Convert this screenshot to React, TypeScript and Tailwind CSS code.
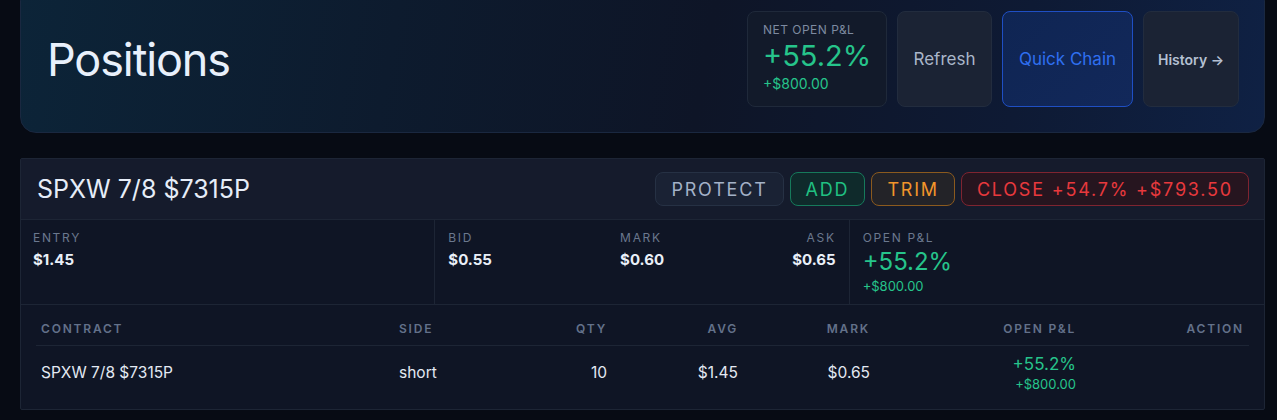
import React from "react";

export default function App() {
  const font = { fontFamily: "Inter, 'Noto Sans', sans-serif" };
  return (
    <div className="min-h-[420px] w-full bg-[#070b14] pl-[20px] pr-[12px] pb-[10px] overflow-hidden" style={font}>
      {/* Header card */}
      <div className="mt-[-15px] flex items-center justify-between rounded-2xl border border-[#1a2840] bg-[linear-gradient(100deg,#0c2438_0%,#0d1b2e_30%,#0e1527_55%,#0e1a34_80%,#0f2144_100%)] py-[25px] pl-[26px] pr-[25px]">
        <h1 className="text-[45px] font-normal leading-none tracking-tight text-[#e8f0fb]">Positions</h1>
        <div className="flex h-[96px] items-stretch gap-[10px]">
          <div className="flex w-[140px] flex-col rounded-lg border border-[#1f293a] bg-[#121a2a] px-[15px] pt-[10px]">
            <div className="text-[12px] leading-4 tracking-[0.04em] text-[#7d8aa0]">NET OPEN P&amp;L</div>
            <div className="text-[29px] leading-9 text-[#26c48b]">+55.2%</div>
            <div className="text-[14px] leading-5 text-[#26c48b]">+$800.00</div>
          </div>
          <button className="w-[95px] rounded-lg border border-[#222c3e] bg-[#1b2334] pt-[2px] text-[17px] text-[#aab6c9]">Refresh</button>
          <button className="w-[131px] rounded-lg border border-[#1f4fc4] bg-[linear-gradient(135deg,#0f2553_0%,#12285a_100%)] pt-[2px] text-[17px] text-[#2f6ff0]">Quick Chain</button>
          <button className="w-[96px] rounded-lg border border-[#222c3e] bg-[#1b2334] text-[14px] font-semibold text-[#b4c0d3]">History →</button>
        </div>
      </div>

      {/* Position card */}
      <div className="mt-[25px] rounded-[2px] border border-[#1d2535] bg-[#0f1525]">
        <div className="flex items-center justify-between border-b border-[#1d2535] bg-[#151b2c] py-[12px] pl-[16px] pr-[15px]">
          <div className="text-[25px] leading-9 text-[#e6edf8]">SPXW 7/8 $7315P</div>
          <div className="flex gap-[6px]">
            <button className="h-[34px] rounded-lg border border-[#263144] bg-[#1a2234] px-[15px] text-[18px] tracking-[0.1em] text-[#a3b1c7]">PROTECT</button>
            <button className="h-[34px] rounded-lg border border-[#167a5b] bg-[#0f2a2b] px-[15px] text-[18px] tracking-[0.1em] text-[#20c082]">ADD</button>
            <button className="h-[34px] rounded-lg border border-[#8b5a1e] bg-[#232328] px-[15px] text-[18px] tracking-[0.1em] text-[#f1952b]">TRIM</button>
            <button className="h-[34px] rounded-lg border border-[#7f2430] bg-[#26151f] px-[15px] text-[18px] tracking-[0.1em] text-[#e8393d]">CLOSE +54.7% +$793.50</button>
          </div>
        </div>

        <div className="grid grid-cols-3 border-b border-[#1d2535]">
          <div className="border-r border-[#1d2535] px-[12px] py-2.5">
            <div className="text-[12px] leading-4 tracking-[0.14em] text-[#6b788e]">ENTRY</div>
            <div className="mt-[2px] text-[15px] font-bold leading-6 text-[#e9eff8]">$1.45</div>
          </div>
          <div className="flex justify-between border-r border-[#1d2535] px-[13px] py-2.5">
            <div>
              <div className="text-[12px] leading-4 tracking-[0.14em] text-[#6b788e]">BID</div>
              <div className="mt-[2px] text-[15px] font-bold leading-6 text-[#e9eff8]">$0.55</div>
            </div>
            <div>
              <div className="text-[12px] leading-4 tracking-[0.14em] text-[#6b788e]">MARK</div>
              <div className="mt-[2px] text-[15px] font-bold leading-6 text-[#e9eff8]">$0.60</div>
            </div>
            <div className="text-right">
              <div className="text-[12px] leading-4 tracking-[0.14em] text-[#6b788e]">ASK</div>
              <div className="mt-[2px] text-[15px] font-bold leading-6 text-[#e9eff8]">$0.65</div>
            </div>
          </div>
          <div className="px-[13px] py-2.5">
            <div className="text-[12px] leading-4 tracking-[0.14em] text-[#6b788e]">OPEN P&amp;L</div>
            <div className="text-[24px] leading-8 text-[#26c48b]">+55.2%</div>
            <div className="text-[13px] leading-4 text-[#26c48b]">+$800.00</div>
          </div>
        </div>

        <div className="px-[15px] pt-[8px] pb-[9px]">
          <table className="w-full table-fixed border-collapse">
            <colgroup>
              <col className="w-[358px]" />
              <col className="w-[109px]" />
              <col className="w-[109px]" />
              <col className="w-[131px]" />
              <col className="w-[132px]" />
              <col className="w-[206px]" />
              <col className="w-[168px]" />
            </colgroup>
            <thead>
              <tr className="border-b border-[#1d2535] text-[12px] font-semibold leading-4 tracking-[0.15em] text-[#63718a]">
                <th className="px-[5px] py-2 text-left font-semibold">CONTRACT</th>
                <th className="px-[5px] py-2 text-left font-semibold">SIDE</th>
                <th className="px-[5px] py-2 text-right font-semibold">QTY</th>
                <th className="px-[5px] py-2 text-right font-semibold">AVG</th>
                <th className="px-[5px] py-2 text-right font-semibold">MARK</th>
                <th className="px-[5px] py-2 text-right font-semibold">OPEN P&amp;L</th>
                <th className="px-[5px] py-2 text-right font-semibold">ACTION</th>
              </tr>
            </thead>
            <tbody>
              <tr className="text-[15.5px] text-[#e3e9f3]">
                <td className="px-[5px] py-[7px] text-left">SPXW 7/8 $7315P</td>
                <td className="px-[5px] py-[7px] text-left">short</td>
                <td className="px-[5px] py-[7px] text-right">10</td>
                <td className="px-[5px] py-[7px] text-right">$1.45</td>
                <td className="px-[5px] py-[7px] text-right">$0.65</td>
                <td className="px-[5px] py-[7px] text-right">
                  <div className="text-[17px] leading-[22px] text-[#26c48b]">+55.2%</div>
                  <div className="text-[13px] leading-[18px] text-[#26c48b]">+$800.00</div>
                </td>
                <td className="px-[5px] py-[7px] text-right"></td>
              </tr>
            </tbody>
          </table>
        </div>
      </div>
    </div>
  );
}
